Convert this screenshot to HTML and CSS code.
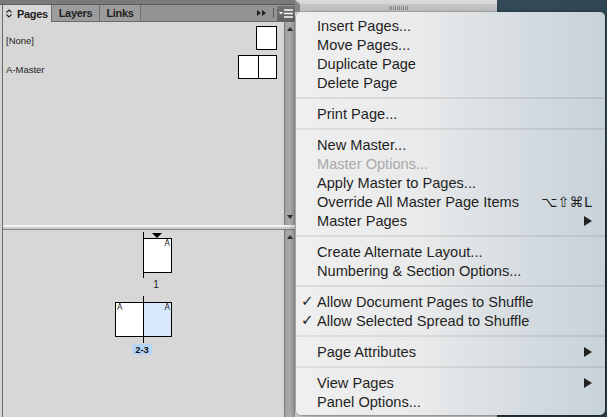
FILE: index.html
```html
<!DOCTYPE html>
<html>
<head>
<meta charset="utf-8">
<link rel="stylesheet" href="styles.css">
</head>
<body>
<div class="screen">
  <section class="panel">
    <div class="panel-top"></div>
    <div class="panel-body">
      <div class="tabbar">
        <div class="tab active">
          <svg class="updown" width="6" height="9" viewBox="0 0 6 9"><path d="M0.5 3.5 L3 1 L5.5 3.5 M0.5 5.5 L3 8 L5.5 5.5" fill="none" stroke="#222" stroke-width="1.1"/></svg>
          <span>Pages</span>
        </div>
        <div class="tab layers">Layers</div>
        <div class="tab links">Links</div>
        <div class="tab-fill">
          <svg class="collapse" width="9" height="6" viewBox="0 0 9 6"><path d="M0 0 L4 3 L0 6 Z M5 0 L9 3 L5 6 Z" fill="#1e1e1e"/></svg>
          <span class="tb-sep"></span>
          <div class="menu-btn">
            <svg width="14" height="9" viewBox="0 0 14 9"><path d="M0 3 L4 3 L2 5.5 Z" fill="#fff"/><path d="M5 1 H14 M5 4.5 H14 M5 8 H14" stroke="#fff" stroke-width="1.4"/></svg>
          </div>
        </div>
      </div>

      <div class="pane pane-masters">
        <div class="pane-content masters">
          <div class="master-row">
            <span class="master-name">[None]</span>
            <div class="mthumb"><div class="mpage"></div></div>
          </div>
          <div class="master-row">
            <span class="master-name">A-Master</span>
            <div class="mthumb"><div class="mpage"></div><div class="mpage"></div></div>
          </div>
        </div>
        <div class="scrollbar"><span class="arrow up"></span><span class="arrow down"></span></div>
      </div>

      <div class="divider"></div>

      <div class="pane pane-pages">
        <div class="pane-content pages">
          <div class="spread-row first">
            <span class="spine"></span>
            <div class="spread">
              <div class="ghost"></div>
              <div class="page"><span class="current"></span><span class="mark right">A</span></div>
            </div>
          </div>
          <div class="plabel-row">
            <div class="ghost"></div>
            <span class="plabel">1</span>
          </div>
          <div class="spread-row second">
            <span class="spine"></span>
            <div class="spread">
              <div class="page"><span class="mark left">A</span></div>
              <div class="page selected"><span class="mark right">A</span></div>
            </div>
          </div>
          <div class="plabel-row centered">
            <span class="plabel sel">2-3</span>
          </div>
        </div>
        <div class="scrollbar"><span class="arrow up"></span></div>
      </div>
    </div>
  </section>

  <section class="side">
    <div class="dock">
      <div class="dock-head"><span class="grip"></span></div>
    </div>
    <div class="desktop"></div>
  </section>

  <div class="menu">
    <div class="mi"><span class="ck"></span>Insert Pages...</div>
    <div class="mi"><span class="ck"></span>Move Pages...</div>
    <div class="mi"><span class="ck"></span>Duplicate Page</div>
    <div class="mi"><span class="ck"></span>Delete Page</div>
    <div class="sep"></div>
    <div class="mi"><span class="ck"></span>Print Page...</div>
    <div class="sep"></div>
    <div class="mi"><span class="ck"></span>New Master...</div>
    <div class="mi disabled"><span class="ck"></span>Master Options...</div>
    <div class="mi"><span class="ck"></span>Apply Master to Pages...</div>
    <div class="mi"><span class="ck"></span>Override All Master Page Items<span class="kbd">⌥⇧⌘L</span></div>
    <div class="mi"><span class="ck"></span>Master Pages<span class="sub"></span></div>
    <div class="sep"></div>
    <div class="mi"><span class="ck"></span>Create Alternate Layout...</div>
    <div class="mi"><span class="ck"></span>Numbering &amp; Section Options...</div>
    <div class="sep"></div>
    <div class="mi"><span class="ck">✓</span>Allow Document Pages to Shuffle</div>
    <div class="mi"><span class="ck">✓</span>Allow Selected Spread to Shuffle</div>
    <div class="sep"></div>
    <div class="mi"><span class="ck"></span>Page Attributes<span class="sub"></span></div>
    <div class="sep"></div>
    <div class="mi"><span class="ck"></span>View Pages<span class="sub"></span></div>
    <div class="mi"><span class="ck"></span>Panel Options...</div>
  </div>
</div>
</body>
</html>
```
FILE: styles.css
```css
* { box-sizing: border-box; margin: 0; padding: 0; }

body {
  width: 607px;
  height: 417px;
  overflow: hidden;
  font-family: "Liberation Sans", Arial, sans-serif;
  background: #2d4351;
}

.screen {
  position: relative;
  display: flex;
  width: 607px;
  height: 417px;
}

/* ---------- left panel ---------- */
.panel {
  width: 295px;
  flex: none;
  display: flex;
  flex-direction: column;
  background: #d3d3d3;
}

.panel-top {
  height: 5px;
  background: #7a7a7a;
  border-bottom: 1px solid #5c5c5c;
}

.panel-body {
  flex: 1;
  min-height: 0;
  display: flex;
  flex-direction: column;
  margin-left: 2px;
  border-left: 1px solid #6c6c6c;
}

.tabbar {
  height: 17px;
  flex: none;
  display: flex;
  background: #939393;
}

.tab {
  display: flex;
  align-items: center;
  justify-content: center;
  font-size: 11px;
  font-weight: bold;
  letter-spacing: -0.3px;
  color: #1f1f1f;
  background: #9c9c9c;
  border-right: 1px solid #6e6e6e;
  border-bottom: 1px solid #6a6a6a;
}

.tab.active {
  width: 49px;
  background: #d7d7d7;
  border-bottom: 0;
  justify-content: flex-start;
  padding-left: 3px;
  gap: 5px;
}

.tab.layers { width: 48px; }
.tab.links { width: 41px; }

.tab-fill {
  flex: 1;
  display: flex;
  align-items: center;
  justify-content: flex-end;
  border-bottom: 1px solid #6a6a6a;
}

.collapse { margin-right: 7px; }

.tb-sep {
  width: 1px;
  height: 10px;
  background: #5a5a5a;
  margin-right: 3px;
}

.menu-btn {
  width: 18px;
  height: 15px;
  margin-top: 1px;
  align-self: flex-start;
  display: flex;
  align-items: center;
  justify-content: center;
  background: linear-gradient(#747474, #636363);
}

/* panes */
.pane {
  display: flex;
  min-height: 0;
}

.pane-masters { height: 203px; flex: none; }
.pane-pages { flex: 1; }

.pane-content {
  flex: 1;
  background: #d7d7d7;
}

.scrollbar {
  width: 11px;
  flex: none;
  position: relative;
  background: linear-gradient(90deg, #7e7e7e 0, #7e7e7e 1px, #a2a2a2 1px, #b5b5b5 55%, #a4a4a4 90%, #8e8e8e 100%);
}

.arrow {
  position: absolute;
  left: 3px;
  width: 0;
  height: 0;
  border-left: 3px solid transparent;
  border-right: 3px solid transparent;
}
.arrow.up { top: 5px; border-bottom: 4px solid #2e2e2e; }
.arrow.down { bottom: 6px; border-top: 4px solid #2e2e2e; }

.masters {
  display: flex;
  flex-direction: column;
  gap: 5px;
  padding: 4px 7px 0 3px;
}

.master-row {
  display: flex;
  align-items: center;
  justify-content: space-between;
}

.master-name {
  font-size: 9.5px;
  color: #1c1c1c;
  padding-top: 5px;
}

.mthumb {
  display: flex;
  border: 1px solid #000;
  background: #fff;
}

.mpage {
  width: 19px;
  height: 22px;
}
.mpage + .mpage { border-left: 1px solid #000; width: 18px; }

.divider {
  height: 5px;
  flex: none;
  background: linear-gradient(#f3f3f3 0, #f3f3f3 2px, #cdcdcd 2px, #cdcdcd 4px, #858585 4px);
}

/* pages */
.pages {
  padding-top: 2px;
  display: flex;
  flex-direction: column;
}

.spread-row {
  position: relative;
  display: flex;
  justify-content: center;
}
.spread-row.first { padding: 6px 0 5px; }
.spread-row.second { padding: 6px 0 6px; }

.spine {
  position: absolute;
  top: 0;
  bottom: 0;
  left: calc(50% - 0.5px);
  width: 1px;
  background: #000;
}

.spread { display: flex; }

.ghost { width: 28px; flex: none; }

.page {
  position: relative;
  width: 29px;
  height: 35px;
  background: #fff;
  border: 1px solid #000;
}
.page + .page { border-left: 0; width: 28px; }
.page.selected { background: #d9e8fb; }

.current {
  position: absolute;
  top: -6px;
  left: 8px;
  width: 0;
  height: 0;
  border-left: 5px solid transparent;
  border-right: 5px solid transparent;
  border-top: 5px solid #000;
}

.mark {
  position: absolute;
  top: 1px;
  font-family: "DejaVu Sans", sans-serif;
  font-size: 8px;
  line-height: 8px;
  color: #222;
}
.mark.right { right: 1px; }
.mark.left { left: 1px; }

.plabel-row {
  display: flex;
  justify-content: center;
  height: 18px;
}

.plabel {
  width: 29px;
  text-align: center;
  font-size: 10px;
  line-height: 14px;
  color: #222;
  padding-right: 3px;
}

.plabel-row.centered { height: 11px; margin-top: 1px; }

.plabel.sel {
  width: auto;
  padding: 0 3px;
  margin-right: 3px;
  font-size: 9.5px;
  line-height: 11px;
  font-weight: bold;
  background: #b7d4f6;
  color: #111;
}

/* ---------- right side ---------- */
.side {
  flex: 1;
  display: flex;
}

.dock {
  width: 202px;
  flex: none;
  background: #e2e2e2;
}

.dock-head {
  height: 12px;
  background: #c8c8c8;
  border-top: 4px solid #d9d9d9;
  border-left: 5px solid #8a8a8a;
  display: flex;
  justify-content: center;
  align-items: center;
}

.grip {
  width: 19px;
  height: 4px;
  background: repeating-linear-gradient(90deg, #8b8b8b 0, #8b8b8b 1px, transparent 1px, transparent 2px);
}

.desktop {
  flex: 1;
  background:
    radial-gradient(circle at 30% 20%, rgba(90,120,135,.35), transparent 40%),
    radial-gradient(circle at 80% 70%, rgba(20,35,45,.5), transparent 50%),
    #2d4351;
}

/* ---------- popup menu ---------- */
.menu {
  position: absolute;
  left: 296px;
  top: 12px;
  width: 309px;
  padding: 4px 0;
  border-radius: 5px;
  background: linear-gradient(90deg, #efefef 0%, #e9eaeb 40%, #d4dbe0 75%, #c7d2d9 100%);
  box-shadow: 0 0 0 0.5px rgba(0,0,0,.25), 0 4px 14px rgba(0,0,0,.35);
  font-size: 14.6px;
  color: #1f1f1f;
}

.mi {
  height: 19px;
  display: flex;
  align-items: center;
  padding: 0 13px 0 6px;
  white-space: nowrap;
}

.mi.disabled { color: #a9a9a9; }

.ck {
  width: 15px;
  flex: none;
  font-family: "DejaVu Sans", sans-serif;
  font-size: 15px;
  line-height: 19px;
  margin-left: -1px;
  margin-right: 1px;
}

.kbd {
  margin-left: auto;
  font-family: "DejaVu Sans", sans-serif;
  font-size: 14px;
  letter-spacing: 0.3px;
}

.sub {
  margin-left: auto;
  width: 0;
  height: 0;
  border-left: 8px solid #222;
  border-top: 5px solid transparent;
  border-bottom: 5px solid transparent;
}

.sep {
  height: 2px;
  margin: 5px 0;
  background: rgba(0,0,0,.075);
}
```
